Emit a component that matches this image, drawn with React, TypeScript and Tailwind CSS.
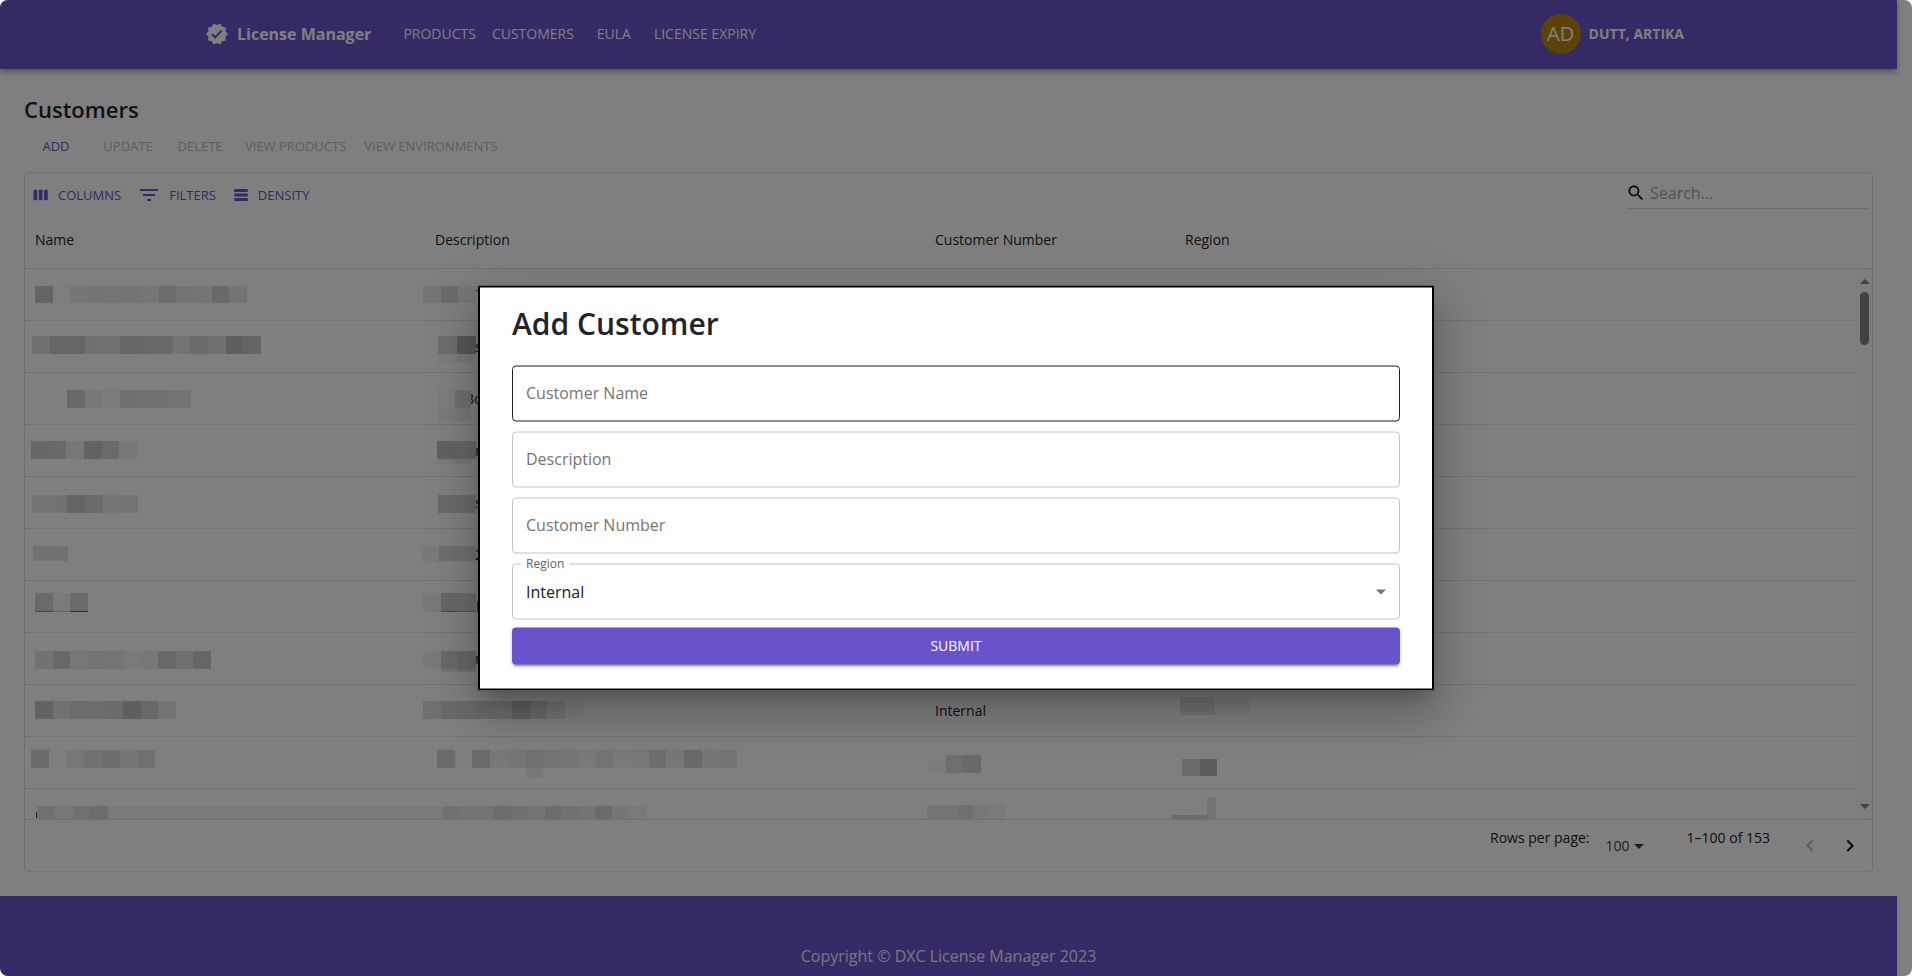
import React from "react";

type Strip = { x: number; y: number; w: number; h: number; tones: number[] };
type Cell = { text?: string; inset?: number; strips?: Strip[] };

const strip = (x: number, y: number, w: number, h: number, tones: number[]): Strip => ({ x, y, w, h, tones });

const rows: Cell[][] = [
  [
    { strips: [strip(10, 17, 212, 17, [200, 250, 236, 232, 234, 232, 236, 216, 230, 234, 210, 232])] },
    { text: "T", inset: 41, strips: [strip(-2, 17, 53, 17, [234, 216, 238])] },
    {},
    {},
  ],
  [
    { strips: [strip(7, 15, 229, 18, [224, 204, 204, 224, 226, 204, 208, 210, 230, 212, 224, 190, 200])] },
    { text: "s", inset: 40, strips: [strip(13, 15, 38, 18, [220, 176]), strip(13, 33, 35, 9, [248, 240])] },
    {},
    {},
  ],
  [
    { strips: [strip(42, 17, 124, 18, [208, 240, 248, 222, 226, 228, 230])] },
    { text: "Bo", inset: 30, strips: [strip(13, 17, 33, 18, [250, 224]), strip(13, 35, 33, 13, [246, 240])] },
    {},
    {},
  ],
  [
    { strips: [strip(6, 16, 106, 18, [206, 210, 238, 196, 212, 240])] },
    { text: "n", inset: 40, strips: [strip(12, 16, 39, 18, [196, 204]), strip(12, 34, 35, 5, [246, 236])] },
    {},
    {},
  ],
  [
    { strips: [strip(7, 18, 106, 18, [230, 228, 202, 214, 234, 230])] },
    { text: "s", inset: 40, strips: [strip(13, 18, 38, 18, [210, 214])] },
    {},
    {},
  ],
  [
    { strips: [strip(8, 17, 35, 15, [228, 226])] },
    { text: "2", inset: 40, strips: [strip(-4, 17, 55, 15, [242, 220, 226])] },
    {},
    {},
  ],
  [
    { strips: [strip(10, 12, 53, 18, [212, 244, 212]), strip(10, 30, 53, 1, [136, 204, 90])] },
    { text: "l", inset: 41, strips: [strip(-2, 12, 53, 18, [242, 206, 214]), strip(-2, 30, 53, 1, [230, 140, 150])] },
    {},
    {},
  ],
  [
    { strips: [strip(10, 18, 176, 18, [228, 208, 238, 232, 234, 242, 238, 208, 224, 204])] },
    { text: "n", inset: 40, strips: [strip(-2, 18, 53, 18, [242, 210, 206]), strip(-2, 36, 53, 3, [254, 232, 224])] },
    {},
    {},
  ],
  [
    { strips: [strip(10, 16, 141, 18, [198, 226, 216, 218, 214, 188, 208, 230])] },
    { strips: [strip(-2, 16, 160, 18, [222, 212, 214, 212, 216, 192, 212, 228, 244])] },
    { text: "Internal" },
    { strips: [strip(5, 12, 70, 18, [228, 246])] },
  ],
  [
    { strips: [strip(6, 13, 124, 18, [214, 252, 238, 226, 218, 236, 226])] },
    {
      strips: [
        strip(12, 13, 300, 18, [212, 250, 212, 240, 236, 226, 230, 234, 242, 230, 242, 240, 218, 238, 210, 236, 230]),
        strip(101, 31, 17, 10, [240]),
      ],
    },
    { strips: [strip(3, 18, 53, 18, [248, 220, 210])] },
    { strips: [strip(7, 22, 35, 17, [214, 184])] },
  ],
  [
    {
      strips: [
        strip(11, 23, 1, 6, [60]),
        strip(12, 17, 71, 14, [226, 238, 226, 216]),
        strip(83, 17, 317, 14, [244]),
      ],
    },
    {
      strips: [
        strip(0, 17, 18, 14, [244]),
        strip(18, 17, 203, 14, [226, 232, 232, 216, 224, 232, 216, 226, 232, 214, 236, 242]),
      ],
    },
    { strips: [strip(2, 16, 78, 15, [234, 234, 224, 238, 244])] },
    { strips: [strip(-3, 26, 35, 5, [214, 216]), strip(32, 8, 9, 23, [232])] },
  ],
];

function Redaction({ x, y, w, h, tones }: Strip) {
  return (
    <span className="absolute flex" style={{ left: x, top: y, width: w, height: h }}>
      {tones.map((t, i) => (
        <span key={i} className="flex-1" style={{ backgroundColor: `rgb(${t},${t},${t})` }} />
      ))}
    </span>
  );
}

function Icon({ d, className }: { d: string; className: string }) {
  return (
    <svg viewBox="0 0 24 24" fill="currentColor" aria-hidden="true" className={className}>
      <path d={d} />
    </svg>
  );
}

const verified =
  "M23 12l-2.44-2.79.34-3.69-3.61-.82-1.89-3.2L12 2.96 8.6 1.5 6.71 4.69 3.1 5.5l.34 3.7L1 12l2.44 2.79-.34 3.7 3.61.82L8.6 22.5l3.4-1.47 3.4 1.46 1.89-3.19 3.61-.82-.34-3.69L23 12zm-12.91 4.72l-3.8-3.81 1.48-1.48 2.32 2.33 5.85-5.87 1.48 1.48-7.33 7.35z";
const columnsIcon =
  "M6 5H3c-.55 0-1 .45-1 1v12c0 .55.45 1 1 1h3c.55 0 1-.45 1-1V6c0-.55-.45-1-1-1zm14 0h-3c-.55 0-1 .45-1 1v12c0 .55.45 1 1 1h3c.55 0 1-.45 1-1V6c0-.55-.45-1-1-1zm-7 0h-3c-.55 0-1 .45-1 1v12c0 .55.45 1 1 1h3c.55 0 1-.45 1-1V6c0-.55-.45-1-1-1z";
const filterIcon = "M10 18h4v-2h-4v2zM3 6v2h18V6H3zm3 7h12v-2H6v2z";
const densityIcon = "M21 8H3V4h18v4zm0 2H3v4h18v-4zm0 6H3v4h18v-4z";
const searchIcon =
  "M15.5 14h-.79l-.28-.27C15.41 12.59 16 11.11 16 9.5 16 5.91 13.09 3 9.5 3S3 5.91 3 9.5 5.91 16 9.5 16c1.61 0 3.09-.59 4.23-1.57l.27.28v.79l5 4.99L20.49 19l-4.99-5zm-6 0C7.01 14 5 11.99 5 9.5S7.01 5 9.5 5 14 7.01 14 9.5 11.99 14 9.5 14z";
const dropIcon = "M7 10l5 5 5-5z";
const leftIcon = "M15.41 16.09l-4.58-4.59 4.58-4.59L14 5.5l-6 6 6 6z";
const rightIcon = "M8.59 16.34l4.58-4.59-4.58-4.59L10 5.75l6 6-6 6z";

function Header() {
  return (
    <header className="relative flex h-[69px] shrink-0 items-center justify-between bg-[#6a52cc] pr-[213px] pb-0.5 pl-[205px] text-white shadow-[0_2px_4px_-1px_rgba(0,0,0,0.2),0_4px_5px_rgba(0,0,0,0.14),0_1px_10px_rgba(0,0,0,0.12)]">
      <div className="flex items-center">
        <a href="#home" className="flex items-center gap-2 text-base font-bold">
          <Icon d={verified} className="size-6" />
          License Manager
        </a>
        <nav className="flex pl-6 text-sm">
          <a href="#products" className="px-2">PRODUCTS</a>
          <a href="#customers" className="px-2">CUSTOMERS</a>
          <a href="#eula" className="w-16 text-center">EULA</a>
          <a href="#expiry" className="px-2">LICENSE EXPIRY</a>
        </nav>
      </div>
      <div className="flex items-center gap-2 text-sm font-bold">
        <span className="flex size-10 items-center justify-center rounded-full bg-[#b8860b] text-xl font-normal">AD</span>
        DUTT, ARTIKA
      </div>
    </header>
  );
}

const actions = ["ADD", "UPDATE", "DELETE", "VIEW PRODUCTS", "VIEW ENVIRONMENTS"];

function Grid() {
  return (
    <section className="flex flex-col rounded border border-[#e0e0e0]">
      <div className="flex h-10 items-start justify-between px-1">
        <div className="flex gap-2 pt-2 text-[13px] leading-7 text-[#6a52cc]">
          <button type="button" className="flex items-center gap-2 px-[5px]">
            <Icon d={columnsIcon} className="-ml-0.5 size-[18px]" />
            COLUMNS
          </button>
          <button type="button" className="flex items-center gap-2 px-[5px]">
            <Icon d={filterIcon} className="-ml-0.5 size-6" />
            FILTERS
          </button>
          <button type="button" className="flex items-center gap-2 px-[5px]">
            <Icon d={densityIcon} className="-ml-0.5 size-[18px]" />
            DENSITY
          </button>
        </div>
        <label className="flex h-9 w-[242px] items-center gap-1 border-b border-[#d8d8d8] pt-1 text-[#111]">
          <Icon d={searchIcon} className="size-5 shrink-0" />
          <input type="search" aria-label="Search" placeholder="Search…" className="w-full min-w-0 bg-transparent text-base outline-none placeholder:text-[#a3a3a3]" />
        </label>
      </div>
      <div className="flex h-[606px] overflow-hidden">
        <div className="min-w-0 flex-1">
          <table className="w-full table-fixed border-separate border-spacing-0 text-sm text-[#212121]">
            <colgroup>
              <col className="w-[400px]" />
              <col className="w-[500px]" />
              <col className="w-[250px]" />
              <col />
            </colgroup>
            <thead>
              <tr>
                {["Name", "Description", "Customer Number", "Region"].map((h) => (
                  <th key={h} className="h-14 border-b border-[#e0e0e0] px-2.5 pb-0.5 text-left font-normal">{h}</th>
                ))}
              </tr>
            </thead>
            <tbody>
              {rows.map((cells, r) => (
                <tr key={r}>
                  {cells.map((c, i) => (
                    <td key={i} className="relative h-[52px] border-b border-[#e0e0e0] px-2.5">
                      {c.text && <span style={{ marginLeft: c.inset ?? 0 }}>{c.text}</span>}
                      {c.strips?.map((s, k) => <Redaction key={k} {...s} />)}
                    </td>
                  ))}
                </tr>
              ))}
            </tbody>
          </table>
        </div>
        <div className="flex w-[15px] flex-col items-center">
          <div className="h-14 w-full shrink-0 border-b border-[#e0e0e0]" />
          <div className="flex w-full flex-1 flex-col items-center bg-[#fcfcfc] py-2.5">
            <svg viewBox="0 0 10 5" className="h-[5px] w-2.5 fill-[#858585]"><path d="M0 5 5 0l5 5z" /></svg>
            <div className="mt-2 h-[53px] w-[9px] rounded-full bg-[#858585]" />
            <svg viewBox="0 0 10 5" className="mt-auto h-[5px] w-2.5 fill-[#858585]"><path d="M0 0h10L5 5z" /></svg>
          </div>
        </div>
      </div>
      <div className="flex h-[52px] items-start justify-end border-t border-[#e0e0e0] pr-2.5 text-sm text-[#212121]">
        <label htmlFor="page-size" className="pt-2">Rows per page:</label>
        <div className="relative mr-8 ml-4 flex items-center pt-4 text-[#424242]">
          <select id="page-size" className="appearance-none bg-transparent pr-6 leading-5">
            <option>100</option>
          </select>
          <Icon d={dropIcon} className="pointer-events-none absolute right-1 size-6" />
        </div>
        <span className="pt-2">1–100 of 153</span>
        <div className="flex gap-4 pt-3.5 pl-7">
          <button type="button" aria-label="Previous page" disabled className="text-[#bdbdbd]">
            <Icon d={leftIcon} className="size-6" />
          </button>
          <button type="button" aria-label="Next page" className="text-[#111]">
            <Icon d={rightIcon} className="size-6" />
          </button>
        </div>
      </div>
    </section>
  );
}

function Field({ id, label, active }: { id: string; label: string; active?: boolean }) {
  return (
    <input
      id={id}
      aria-label={label}
      placeholder={label}
      className={
        "h-14 w-full rounded border px-[13px] pb-0.5 text-base outline-none placeholder:text-[#757575] " +
        (active ? "border-[#212121]" : "border-[#c4c4c4]")
      }
    />
  );
}

function AddCustomer() {
  return (
    <form
      role="dialog"
      aria-labelledby="dialog-title"
      className="absolute top-1/2 left-1/2 w-1/2 -translate-x-1/2 -translate-y-1/2 border-2 border-black bg-white px-8 pt-4 pb-6 shadow-[0_11px_15px_-7px_rgba(0,0,0,0.2),0_24px_38px_3px_rgba(0,0,0,0.14),0_9px_46px_8px_rgba(0,0,0,0.12)]"
    >
      <h2 id="dialog-title" className="text-[30px] leading-10 font-semibold text-[#212529]">
        Add Customer
      </h2>
      <div className="mt-[22px] flex flex-col gap-2.5">
        <Field id="customer-name" label="Customer Name" active />
        <Field id="description" label="Description" />
        <Field id="customer-number" label="Customer Number" />
        <div className="relative">
          <label htmlFor="region" className="absolute -top-2 left-[9px] bg-white px-[5px] text-xs leading-4 text-[#666]">Region</label>
          <select id="region" className="h-14 w-full appearance-none rounded border border-[#c4c4c4] bg-white px-[13px] text-base text-[#212121]">
            <option>Internal</option>
          </select>
          <Icon d={dropIcon} className="pointer-events-none absolute top-4 right-[7px] size-6 text-[#757575]" />
        </div>
      </div>
      <button
        type="submit"
        className="mt-2 h-[37px] w-full rounded bg-[#6a52cc] pb-0.5 text-sm font-medium text-white shadow-[0_3px_1px_-2px_rgba(0,0,0,0.2),0_2px_2px_rgba(0,0,0,0.14),0_1px_5px_rgba(0,0,0,0.12)]"
      >
        SUBMIT
      </button>
    </form>
  );
}

export default function App() {
  return (
    <div className="relative flex h-screen flex-col overflow-hidden rounded-lg bg-white pr-[15px] font-['Open_Sans',sans-serif]">
      <Header />
      <main className="px-6 pt-6 pb-6">
        <h1 className="text-[22px] leading-8 font-semibold text-[#212529]">Customers</h1>
        <div className="mt-1.5 mb-2.5 flex gap-2 text-[13px]">
          {actions.map((a, i) => (
            <button
              key={a}
              type="button"
              disabled={i > 0}
              className="h-[31px] min-w-16 px-[5px] text-[#6a52cc] disabled:text-[#bdbdbd]"
            >
              {a}
            </button>
          ))}
        </div>
        <Grid />
      </main>
      <footer className="flex-1 bg-[#6a52cc] pt-12 text-center text-base text-white/90">
        Copyright © DXC License Manager 2023
      </footer>
      <div className="absolute inset-0 bg-black/50">
        <AddCustomer />
      </div>
    </div>
  );
}
